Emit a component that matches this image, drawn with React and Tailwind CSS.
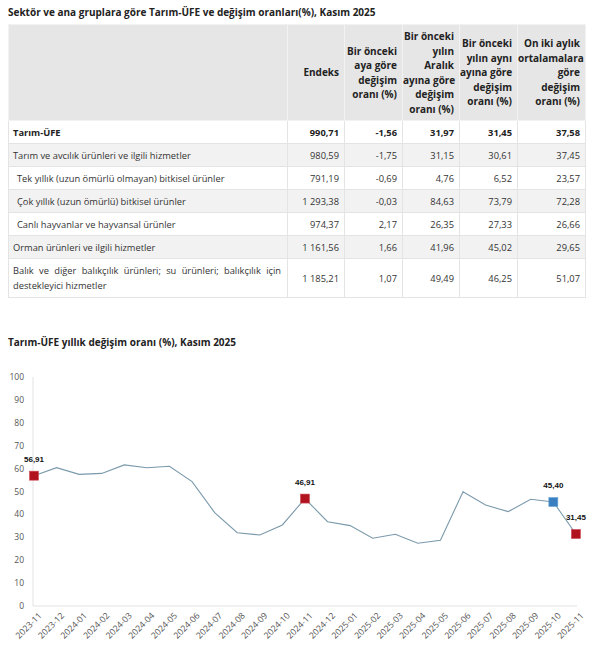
import React from "react";

const rows = [
  { label: "Tarım-ÜFE", v: ["990,71", "-1,56", "31,97", "31,45", "37,58"], bold: true },
  { label: "Tarım ve avcılık ürünleri ve ilgili hizmetler", v: ["980,59", "-1,75", "31,15", "30,61", "37,45"] },
  { label: "Tek yıllık (uzun ömürlü olmayan) bitkisel ürünler", v: ["791,19", "-0,69", "4,76", "6,52", "23,57"], indent: true },
  { label: "Çok yıllık (uzun ömürlü) bitkisel ürünler", v: ["1 293,38", "-0,03", "84,63", "73,79", "72,28"], indent: true },
  { label: "Canlı hayvanlar ve hayvansal ürünler", v: ["974,37", "2,17", "26,35", "27,33", "26,66"], indent: true },
  { label: "Orman ürünleri ve ilgili hizmetler", v: ["1 161,56", "1,66", "41,96", "45,02", "29,65"] },
  { label: "Balık ve diğer balıkçılık ürünleri; su ürünleri; balıkçılık için destekleyici hizmetler", v: ["1 185,21", "1,07", "49,49", "46,25", "51,07"], tall: true },
];

const heads = [
  ["Endeks"],
  ["Bir önceki", "aya göre", "değişim", "oranı (%)"],
  ["Bir önceki", "yılın", "Aralık", "ayına göre", "değişim", "oranı (%)"],
  ["Bir önceki", "yılın aynı", "ayına göre", "değişim", "oranı (%)"],
  ["On iki aylık", "ortalamalara", "göre", "değişim", "oranı (%)"],
];

const widths = ["w-[279px]", "w-[57px]", "w-[58px]", "w-[57px]", "w-[58px]", "w-[68px]"];

const series = [56.91, 60.4, 57.5, 57.9, 61.6, 60.4, 61.0, 54.3, 40.8, 32.0, 31.0, 35.4, 46.91, 36.8, 35.1, 29.6, 31.3, 27.4, 28.7, 49.9, 44.1, 41.2, 46.6, 45.4, 31.45];
const months = [];
for (let i = 0; i < 25; i++) {
  const m = 10 + i;
  const y = 2023 + Math.floor(m / 12);
  months.push(`${y}-${String((m % 12) + 1).padStart(2, "0")}`);
}

const TOP = 355;
const X = (i) => 34 + i * 22.58;
const Y = (v) => 606 - v * 2.29 - TOP;

const marks = { 0: "#b0121e", 12: "#b0121e", 23: "#3a80c1", 24: "#b0121e" };

function Chart() {
  const pts = series.map((v, i) => `${X(i)},${Y(v)}`).join(" ");
  return (
    <svg width="600" height="296" className="block" style={{ fontFamily: "'Open Sans', sans-serif" }}>
      <line x1="33" y1={Y(100)} x2="33" y2={Y(0)} stroke="#e3e3e3" />
      <line x1="33" y1={Y(0)} x2="577" y2={Y(0)} stroke="#e3e3e3" />
      {[0, 10, 20, 30, 40, 50, 60, 70, 80, 90, 100].map((t) => (
        <text key={t} x="24" y={Y(t) + 3} fontSize="8.5" fill="#555" textAnchor="end">
          {t}
        </text>
      ))}
      {months.map((m, i) => (
        <text key={m} fontSize="8.7" fill="#555" textAnchor="end" transform={`translate(${X(i) + 4},${612 - TOP}) rotate(-45)`} dy="6">
          {m}
        </text>
      ))}
      <polyline points={pts} fill="none" stroke="#7a99ab" strokeWidth="1.1" />
      {Object.entries(marks).map(([i, c]) => (
        <g key={i}>
          <rect x={X(+i) - 4.5} y={Y(series[i]) - 4.5} width="9" height="9" fill={c} stroke={c === "#3a80c1" ? "#6aa3d6" : "#d04a52"} strokeWidth="0.6" />
          <text x={X(+i)} y={Y(series[i]) - 14} fontSize="8" fontWeight="700" fill="#111" textAnchor="middle" style={{ fontFamily: "'Liberation Sans', Arial, sans-serif" }}>
            {series[i].toFixed(2).replace(".", ",")}
          </text>
        </g>
      ))}
    </svg>
  );
}

export default function App() {
  return (
    <div className="w-[600px] h-[651px] bg-white overflow-hidden text-[#333]" style={{ fontFamily: "'Open Sans', sans-serif" }}>
      <div className="pl-2 pt-[5px]">
        <h1 className="text-[10px] leading-[14px] font-bold text-[#222]">
          Sektör ve ana gruplara göre Tarım-ÜFE ve değişim oranları(%), Kasım 2025
        </h1>
        <table className="mt-[5px] border-collapse text-[9.3px] leading-[15px] table-fixed w-[577px]">
          <thead>
            <tr className="bg-[#e6e6e6] h-[96px]">
              <th className={`${widths[0]} border border-[#f2f2f2] p-0`}></th>
              {heads.map((h, i) => (
                <th key={i} className={`${widths[i + 1]} border border-[#f2f2f2] pl-0 pr-[5px] py-0 text-right align-middle font-bold text-[#222] text-[10px] leading-[14.5px]`}>
                  {h.map((l) => (
                    <div key={l} className="whitespace-nowrap">{l}</div>
                  ))}
                </th>
              ))}
            </tr>
          </thead>
          <tbody>
            {rows.map((r, ri) => (
              <tr key={ri} className={`${ri % 2 === 1 ? "bg-[#f2f2f2]" : "bg-white"} ${r.tall ? "h-[39px]" : "h-[23px]"} ${r.bold ? "font-bold text-[#222]" : ""}`}>
                <td className={`border border-[#e4e4e4] pr-[6px] py-0 ${r.indent ? "pl-[8px]" : "pl-[4px]"} ${r.tall ? "text-justify [text-align-last:left]" : ""}`}>
                  {r.label}
                </td>
                {r.v.map((v, i) => (
                  <td key={i} className="border border-[#e4e4e4] px-[5px] py-0 text-right whitespace-nowrap">
                    {v}
                  </td>
                ))}
              </tr>
            ))}
          </tbody>
        </table>
        <h2 className="mt-[37px] text-[10px] leading-[14px] font-bold text-[#222]">
          Tarım-ÜFE yıllık değişim oranı (%), Kasım 2025
        </h2>
      </div>
      <div className="mt-[6px]">
        <Chart />
      </div>
    </div>
  );
}
